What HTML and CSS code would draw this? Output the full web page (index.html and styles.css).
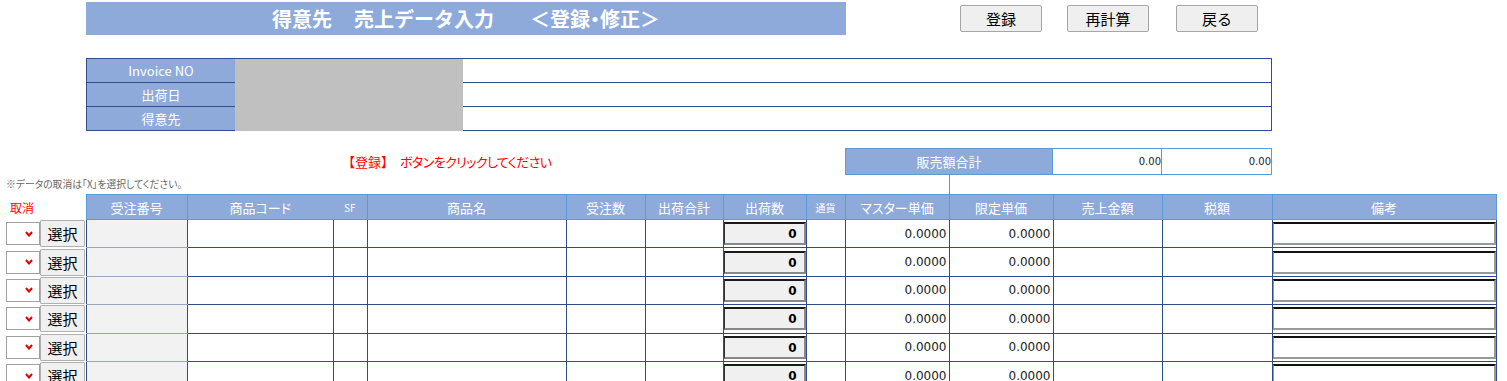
FILE: index.html
```html
<!DOCTYPE html>
<html lang="ja">
<head>
  <meta charset="UTF-8">
  <meta name="viewport" content="width=device-width, initial-scale=1">
  <title>得意先 売上データ入力</title>
  <link rel="stylesheet" href="styles.css">
</head>
<body>

  <div class="topbar">
    <div class="title">
      <span>得意先</span><span class="t2">売上データ入力</span><span class="t3">＜登録・修正＞</span>
    </div>
    <button class="btn btn-save">登録</button>
    <button class="btn btn-calc">再計算</button>
    <button class="btn btn-back">戻る</button>
  </div>

  <div class="info">
    <div class="info-label r1">Invoice NO</div>
    <div class="info-value r1"></div>
    <div class="info-label r2">出荷日</div>
    <div class="info-value r2"></div>
    <div class="info-label r3">得意先</div>
    <div class="info-value r3"></div>
    <div class="info-mask"></div>
  </div>

  <div class="summary">
    <div class="message"><span class="bracket">【登録】</span><span class="msg-text">ボタンをクリックしてください</span></div>
    <div class="total-label">販売額合計</div>
    <div class="total-value">0.00</div>
    <div class="total-value last">0.00</div>
  </div>

  <div class="note">※データの取消は「X」を選択してください。</div>

  <table class="sheet">
    <colgroup>
      <col style="width:80px">
      <col style="width:101px">
      <col style="width:146px">
      <col style="width:34px">
      <col style="width:199px">
      <col style="width:79px">
      <col style="width:78px">
      <col style="width:83px">
      <col style="width:39px">
      <col style="width:104px">
      <col style="width:104px">
      <col style="width:109px">
      <col style="width:110px">
      <col style="width:224px">
    </colgroup>
    <thead>
      <tr>
        <th class="cancel">取消</th>
        <th>受注番号</th>
        <th class="code">商品コード</th>
        <th class="sf">SF</th>
        <th>商品名</th>
        <th>受注数</th>
        <th>出荷合計</th>
        <th>出荷数</th>
        <th class="small">通貨</th>
        <th>マスター単価</th>
        <th>限定単価</th>
        <th>売上金額</th>
        <th>税額</th>
        <th>備考</th>
      </tr>
    </thead>
    <tbody id="rows"></tbody>
  </table>

  <script>
    const rows = document.getElementById('rows');

    for (let i = 0; i < 6; i++) {
      const tr = document.createElement('tr');
      tr.innerHTML = `
        <td class="ctrl">
          <div class="ctrl-wrap">
            <span class="pick">
              <svg width="8" height="6" viewBox="0 0 8 6"><polyline points="1,1 4,4.5 7,1" fill="none" stroke="#e00000" stroke-width="2"/></svg>
            </span>
            <button class="sel">選択</button>
          </div>
        </td>
        <td class="order"></td>
        <td></td>
        <td></td>
        <td></td>
        <td class="soft"></td>
        <td></td>
        <td class="qty"><div class="qty-box">0</div></td>
        <td></td>
        <td class="num">0.0000</td>
        <td class="num soft-blue">0.0000</td>
        <td></td>
        <td></td>
        <td class="memo"><div class="memo-box"></div></td>`;
      rows.appendChild(tr);
    }
  </script>

</body>
</html>
```

FILE: styles.css
```css
body {
  margin: 0;
  font-family: "Noto Sans CJK JP", sans-serif;
  font-feature-settings: "palt";
  color: #000;
  background: #fff;
}

/* top bar */
.topbar {
  display: flex;
  align-items: flex-start;
  padding-top: 2px;
}

.title {
  margin-left: 86px;
  width: 760px;
  height: 33px;
  background: #8eaadb;
  color: #fff;
  font-weight: bold;
  font-size: 20px;
  font-feature-settings: normal;
  display: flex;
  justify-content: center;
  align-items: center;
}

.title .t2 {
  margin-left: 22px;
}

.title .t3 {
  margin-left: 36px;
  font-feature-settings: "palt";
}

.btn {
  margin-top: 3px;
  width: 82px;
  height: 27px;
  padding: 0;
  font-family: "Noto Sans CJK JP", sans-serif;
  font-size: 15px;
  color: #000;
  background: #efefef;
  border: 1px solid #a6a6a6;
  border-radius: 2px;
}

.btn-save { margin-left: 114px; }
.btn-calc { margin-left: 25px; }
.btn-back { margin-left: 27px; }

/* invoice info */
.info {
  margin: 23px 0 0 86px;
  width: 1186px;
  box-sizing: border-box;
  display: grid;
  grid-template-columns: 149px 228px 1fr;
  grid-template-rows: repeat(3, 24px);
  border-top: 1px solid #2f4f8f;
  border-right: 1px solid #2f4f8f;
}

.info-label {
  grid-column: 1;
  background: #8eaadb;
  color: #fff;
  font-size: 13px;
  text-align: center;
  line-height: 23px;
  border-left: 1px solid #2f4f8f;
  border-bottom: 1px solid #2f4f8f;
}

.info-value {
  grid-column: 3;
  border-bottom: 1px solid #2f4f8f;
}

.r1 { grid-row: 1; }
.r2 { grid-row: 2; }
.r3 { grid-row: 3; }

.info-mask {
  grid-column: 2;
  grid-row: 1 / span 3;
  background: #c0c0c0;
}

/* message + total */
.summary {
  margin-top: 17px;
  display: grid;
  grid-template-columns: 845px 208px 109px 110px;
  height: 27px;
}

.message {
  padding-left: 342px;
  color: #ff0000;
  font-size: 13px;
  line-height: 27px;
}

.message .bracket {
  font-feature-settings: normal;
}

.message .msg-text {
  margin-left: 6px;
  letter-spacing: -0.6px;
}

.total-label {
  position: relative;
  box-sizing: border-box;
  background: #8eaadb;
  color: #fff;
  font-size: 13px;
  text-align: center;
  line-height: 25px;
  border: 1px solid #5b9bd5;
}

.total-label::after {
  content: "";
  position: absolute;
  left: 50%;
  top: 100%;
  width: 1px;
  height: 20px;
  background: #5b9bd5;
}

.total-value {
  box-sizing: border-box;
  border: 1px solid #5b9bd5;
  border-left: none;
  font-family: "DejaVu Sans", sans-serif;
  font-size: 10px;
  color: #222;
  text-align: right;
  line-height: 25px;
}

.note {
  height: 19px;
  padding-left: 6px;
  font-size: 9.8px;
  line-height: 19px;
  color: #666;
}

/* detail sheet */
.sheet {
  margin-left: 6px;
  width: 1490px;
  table-layout: fixed;
  border-collapse: collapse;
}

.sheet th {
  height: 24px;
  padding: 0;
  background: #8eaadb;
  color: #fff;
  font-weight: normal;
  font-size: 13px;
  border: 1px solid #5b9bd5;
}

.sheet th.cancel {
  background: none;
  border: none;
  color: #ff0000;
  font-size: 12px;
  text-align: left;
  padding-left: 4px;
}

.sheet th.code { border-right-style: hidden; }
.sheet th.sf { border-left-style: hidden; font-size: 10px; }
.sheet th.small { font-size: 10px; }

.sheet td {
  height: 27.4px;
  padding: 0;
  border: 1px solid #2f4b8a;
}

.sheet td.ctrl {
  border: none;
}

.ctrl-wrap {
  display: flex;
  align-items: center;
}

.pick {
  width: 34px;
  height: 23px;
  box-sizing: border-box;
  background: #fff;
  border: 1px solid #a0a0a0;
  display: flex;
  align-items: center;
  justify-content: flex-end;
  padding-right: 6px;
}

.sel {
  width: 45px;
  height: 27px;
  padding: 0;
  font-family: "Noto Sans CJK JP", sans-serif;
  font-size: 15px;
  color: #000;
  background: #f0f0f0;
  border: 1px solid #b0b0b0;
  border-radius: 1px;
}

.sheet td.order {
  background: #f2f2f2;
  border-top-color: #9aa6c0;
  border-bottom-color: #9aa6c0;
}

.sheet td.soft { border-left-color: #8ea0c8; }
.sheet td.soft-blue { border-left-color: #7aa7d8; }

.sheet td.num {
  text-align: right;
  padding-right: 2px;
  font-family: "DejaVu Sans", sans-serif;
  font-size: 12px;
  color: #222;
}

.qty-box {
  height: 23px;
  box-sizing: border-box;
  background: #f0f0f0;
  border-top: 2px solid #1a1a1a;
  border-left: 1px solid #333;
  border-right: 2px solid #888;
  border-bottom: 2px solid #888;
  text-align: right;
  padding-right: 7px;
  font-family: "DejaVu Sans", sans-serif;
  font-weight: bold;
  font-size: 12px;
  line-height: 20px;
}

.memo-box {
  height: 23px;
  box-sizing: border-box;
  background: #fff;
  border-top: 2px solid #111;
  border-left: 1px solid #999;
  border-right: 2px solid #999;
  border-bottom: 2px solid #999;
}
```
